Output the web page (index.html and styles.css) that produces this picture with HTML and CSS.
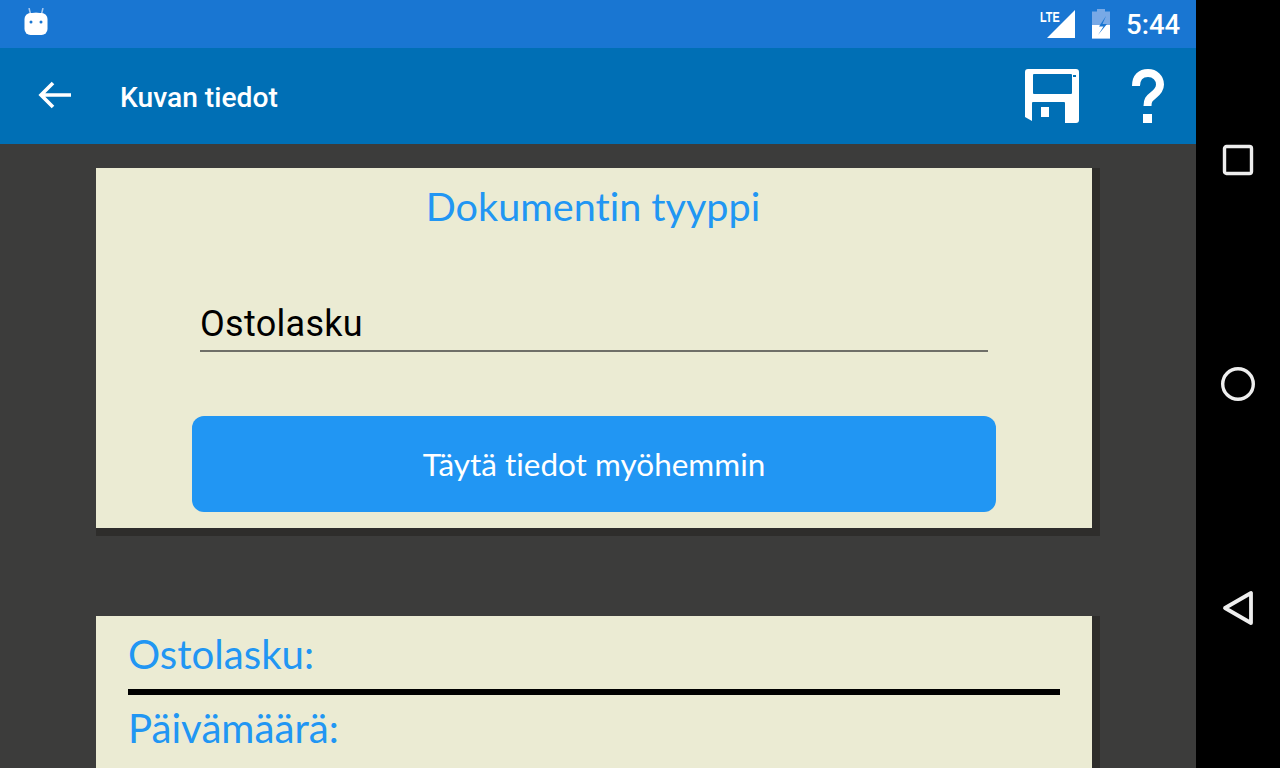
FILE: index.html
```html
<!DOCTYPE html>
<html lang="en">
<head>
  <meta charset="UTF-8">
  <title>Kuvan tiedot</title>
  <link rel="stylesheet" href="styles.css">
</head>
<body>

  <div class="screen">

    <div class="main">

      <!-- Status bar -->
      <div class="status-bar">
        <svg class="status-robot" width="24" height="28" viewBox="0 0 24 28">
          <path d="M5 0l1.500 6M19 0l-1.500 6" stroke="#a9c9ef" stroke-width="1.500" fill="none"/>
          <path d="M4 6Q12 3 20 6Z" fill="#cfe0f5"/>
          <rect x="0.500" y="5" width="23" height="22" rx="6" fill="#fff"/>
          <circle cx="7" cy="14" r="1.500" fill="#1976d2"/>
          <circle cx="17" cy="14" r="1.500" fill="#1976d2"/>
        </svg>
        <div class="status-right">
          <div class="signal">
            <span class="lte">LTE</span>
            <svg width="28" height="28" viewBox="0 0 28 28">
              <path d="M28 0V28H0Z" fill="#fff"/>
            </svg>
          </div>
          <svg class="battery" width="20" height="30" viewBox="0 0 20 30">
            <path d="M6 0h8v2.500h5V29.500H1V2.500h5z" fill="#78a9e6"/>
            <path d="M1 16h18v13.500H1z" fill="#fff"/>
            <path d="M15 7L8 17.500h4.500L7 26l9-11h-4.500z" fill="#1976d2"/>
          </svg>
          <span class="clock">5:44</span>
        </div>
      </div>

      <!-- Toolbar -->
      <div class="toolbar">
        <svg class="back" width="36" height="32" viewBox="0 0 36 32">
          <path d="M34 16H4M16 4L4 16l12 12" stroke="#fff" stroke-width="3.600" fill="none"/>
        </svg>
        <span class="toolbar-title">Kuvan tiedot</span>
        <svg class="save" width="54" height="54" viewBox="0 0 54 54">
          <path fill-rule="evenodd" fill="#fff" d="M3 0H51Q54 0 54 3V51Q54 54 51 54H40V34Q40 33 39 33H8Q7 33 7 34V52L0 48V3Q0 0 3 0ZM8 6V24Q8 25 9 25H46Q47 25 47 24V6Q47 5 46 5H9Q8 5 8 6ZM48 6H51V8H48Z"/>
          <rect x="16" y="38" width="8" height="10" fill="#fff"/>
        </svg>
        <svg class="help" width="34" height="54" viewBox="0 0 34 54">
          <path d="M4 17C4 8 9 4 16 4s12 5 12 11.500c0 5-3 8-7 11-4 3-5.500 5-5.500 10.500" stroke="#fff" stroke-width="8" fill="none"/>
          <rect x="11" y="45" width="9" height="9" fill="#fff"/>
        </svg>
      </div>

      <!-- Content -->
      <div class="content">

        <div class="card card-type">
          <h2 class="card-title">Dokumentin tyyppi</h2>
          <div class="field">Ostolasku</div>
          <button class="later-button">Täytä tiedot myöhemmin</button>
        </div>

        <div class="card card-details">
          <div class="detail-label">Ostolasku:</div>
          <div class="detail-line"></div>
          <div class="detail-label">Päivämäärä:</div>
        </div>

      </div>
    </div>

    <!-- Navigation bar -->
    <div class="nav-bar">
      <svg width="36" height="36" viewBox="0 0 36 36">
        <rect x="4.500" y="4.500" width="27" height="27" rx="2" stroke="#eee" stroke-width="3.400" fill="none"/>
      </svg>
      <svg width="36" height="36" viewBox="0 0 36 36">
        <circle cx="18" cy="18" r="15.300" stroke="#eee" stroke-width="3.400" fill="none"/>
      </svg>
      <svg width="36" height="36" viewBox="0 0 36 36">
        <path d="M31 3V33L5 18Z" stroke="#eee" stroke-width="3.800" stroke-linejoin="round" fill="none"/>
      </svg>
    </div>

  </div>

</body>
</html>
```

FILE: styles.css
```css
/* General styling */
html, body {
  margin: 0;
  padding: 0;
  height: 100%;
  overflow: hidden;
}

body {
  font-family: 'Roboto', sans-serif;
  background-color: #000;
}

.screen {
  display: flex;
  width: 1280px;
  height: 768px;
  overflow: hidden;
}

.main {
  display: flex;
  flex-direction: column;
  width: 1196px;
  flex-shrink: 0;
  background-color: #3c3c3b;
}

/* Status bar */
.status-bar {
  display: flex;
  flex-shrink: 0;
  justify-content: space-between;
  align-items: center;
  height: 48px;
  padding: 0 17px 0 24px;
  background-color: #1976d2;
  color: #fff;
  box-sizing: border-box;
}

.status-robot {
  margin-bottom: 4px;
}

.status-right {
  display: flex;
  align-items: center;
}

.signal {
  display: flex;
  align-items: flex-end;
  height: 28px;
}

.signal svg {
  margin-left: -17px;
}

.lte {
  align-self: flex-start;
  width: 24px;
  font-family: 'Liberation Sans', sans-serif;
  font-size: 15px;
  font-weight: 700;
  line-height: 13px;
  transform: scaleX(0.72);
  transform-origin: left top;
}

.battery {
  margin-left: 16px;
  margin-right: 15px;
}

.clock {
  font-size: 27.500px;
  font-weight: 500;
  width: 53px;
}

/* Toolbar */
.toolbar {
  display: flex;
  flex-shrink: 0;
  align-items: center;
  height: 96px;
  padding: 0 30px 0 37px;
  background-color: #006fb5;
  color: #fff;
  box-sizing: border-box;
}

.back {
  margin-bottom: 2px;
}

.toolbar-title {
  margin: 2px 0 0 47px;
  flex-grow: 1;
  font-size: 28.200px;
  font-weight: 500;
}

.help {
  margin-left: 53px;
}

/* Content */
.content {
  display: flex;
  flex-direction: column;
  align-items: flex-start;
  gap: 80px;
  padding: 24px 0 0 96px;
}

.card {
  flex-shrink: 0;
  width: 996px;
  background-color: #ebebd3;
  border-right: 8px solid #2e2d2b;
  border-bottom: 8px solid #2e2d2b;
  font-variant-ligatures: none;
}

.card-type {
  display: flex;
  flex-direction: column;
  align-items: center;
  height: 360px;
}

.card-title {
  margin: 11px 2px 0 0;
  font-family: 'Lato', sans-serif;
  font-size: 39.600px;
  font-weight: 400;
  line-height: 54px;
  color: #2196f3;
}

.field {
  width: 788px;
  height: 58px;
  margin-top: 59px;
  margin-bottom: 64px;
  border-bottom: 2px solid #6f6f68;
  font-size: 36px;
  line-height: 64px;
  letter-spacing: 0.3px;
  color: #000;
}

.later-button {
  width: 804px;
  height: 96px;
  border: none;
  border-radius: 12px;
  background-color: #2196f3;
  font-family: 'Lato', sans-serif;
  font-size: 31.500px;
  font-variant-ligatures: none;
  color: #fff;
}

.card-details {
  width: 1004px;
  height: 200px;
  padding: 11px 32px 0;
  box-sizing: border-box;
}

.detail-label {
  font-family: 'Lato', sans-serif;
  font-size: 40.200px;
  line-height: 54px;
  color: #2196f3;
}

.detail-line {
  height: 6px;
  margin: 8px 0 6px;
  background-color: #000;
}

/* Navigation bar */
.nav-bar {
  display: flex;
  flex-direction: column;
  align-items: center;
  flex-grow: 1;
  padding-top: 142px;
  gap: 188px;
  background-color: #000;
}
```
